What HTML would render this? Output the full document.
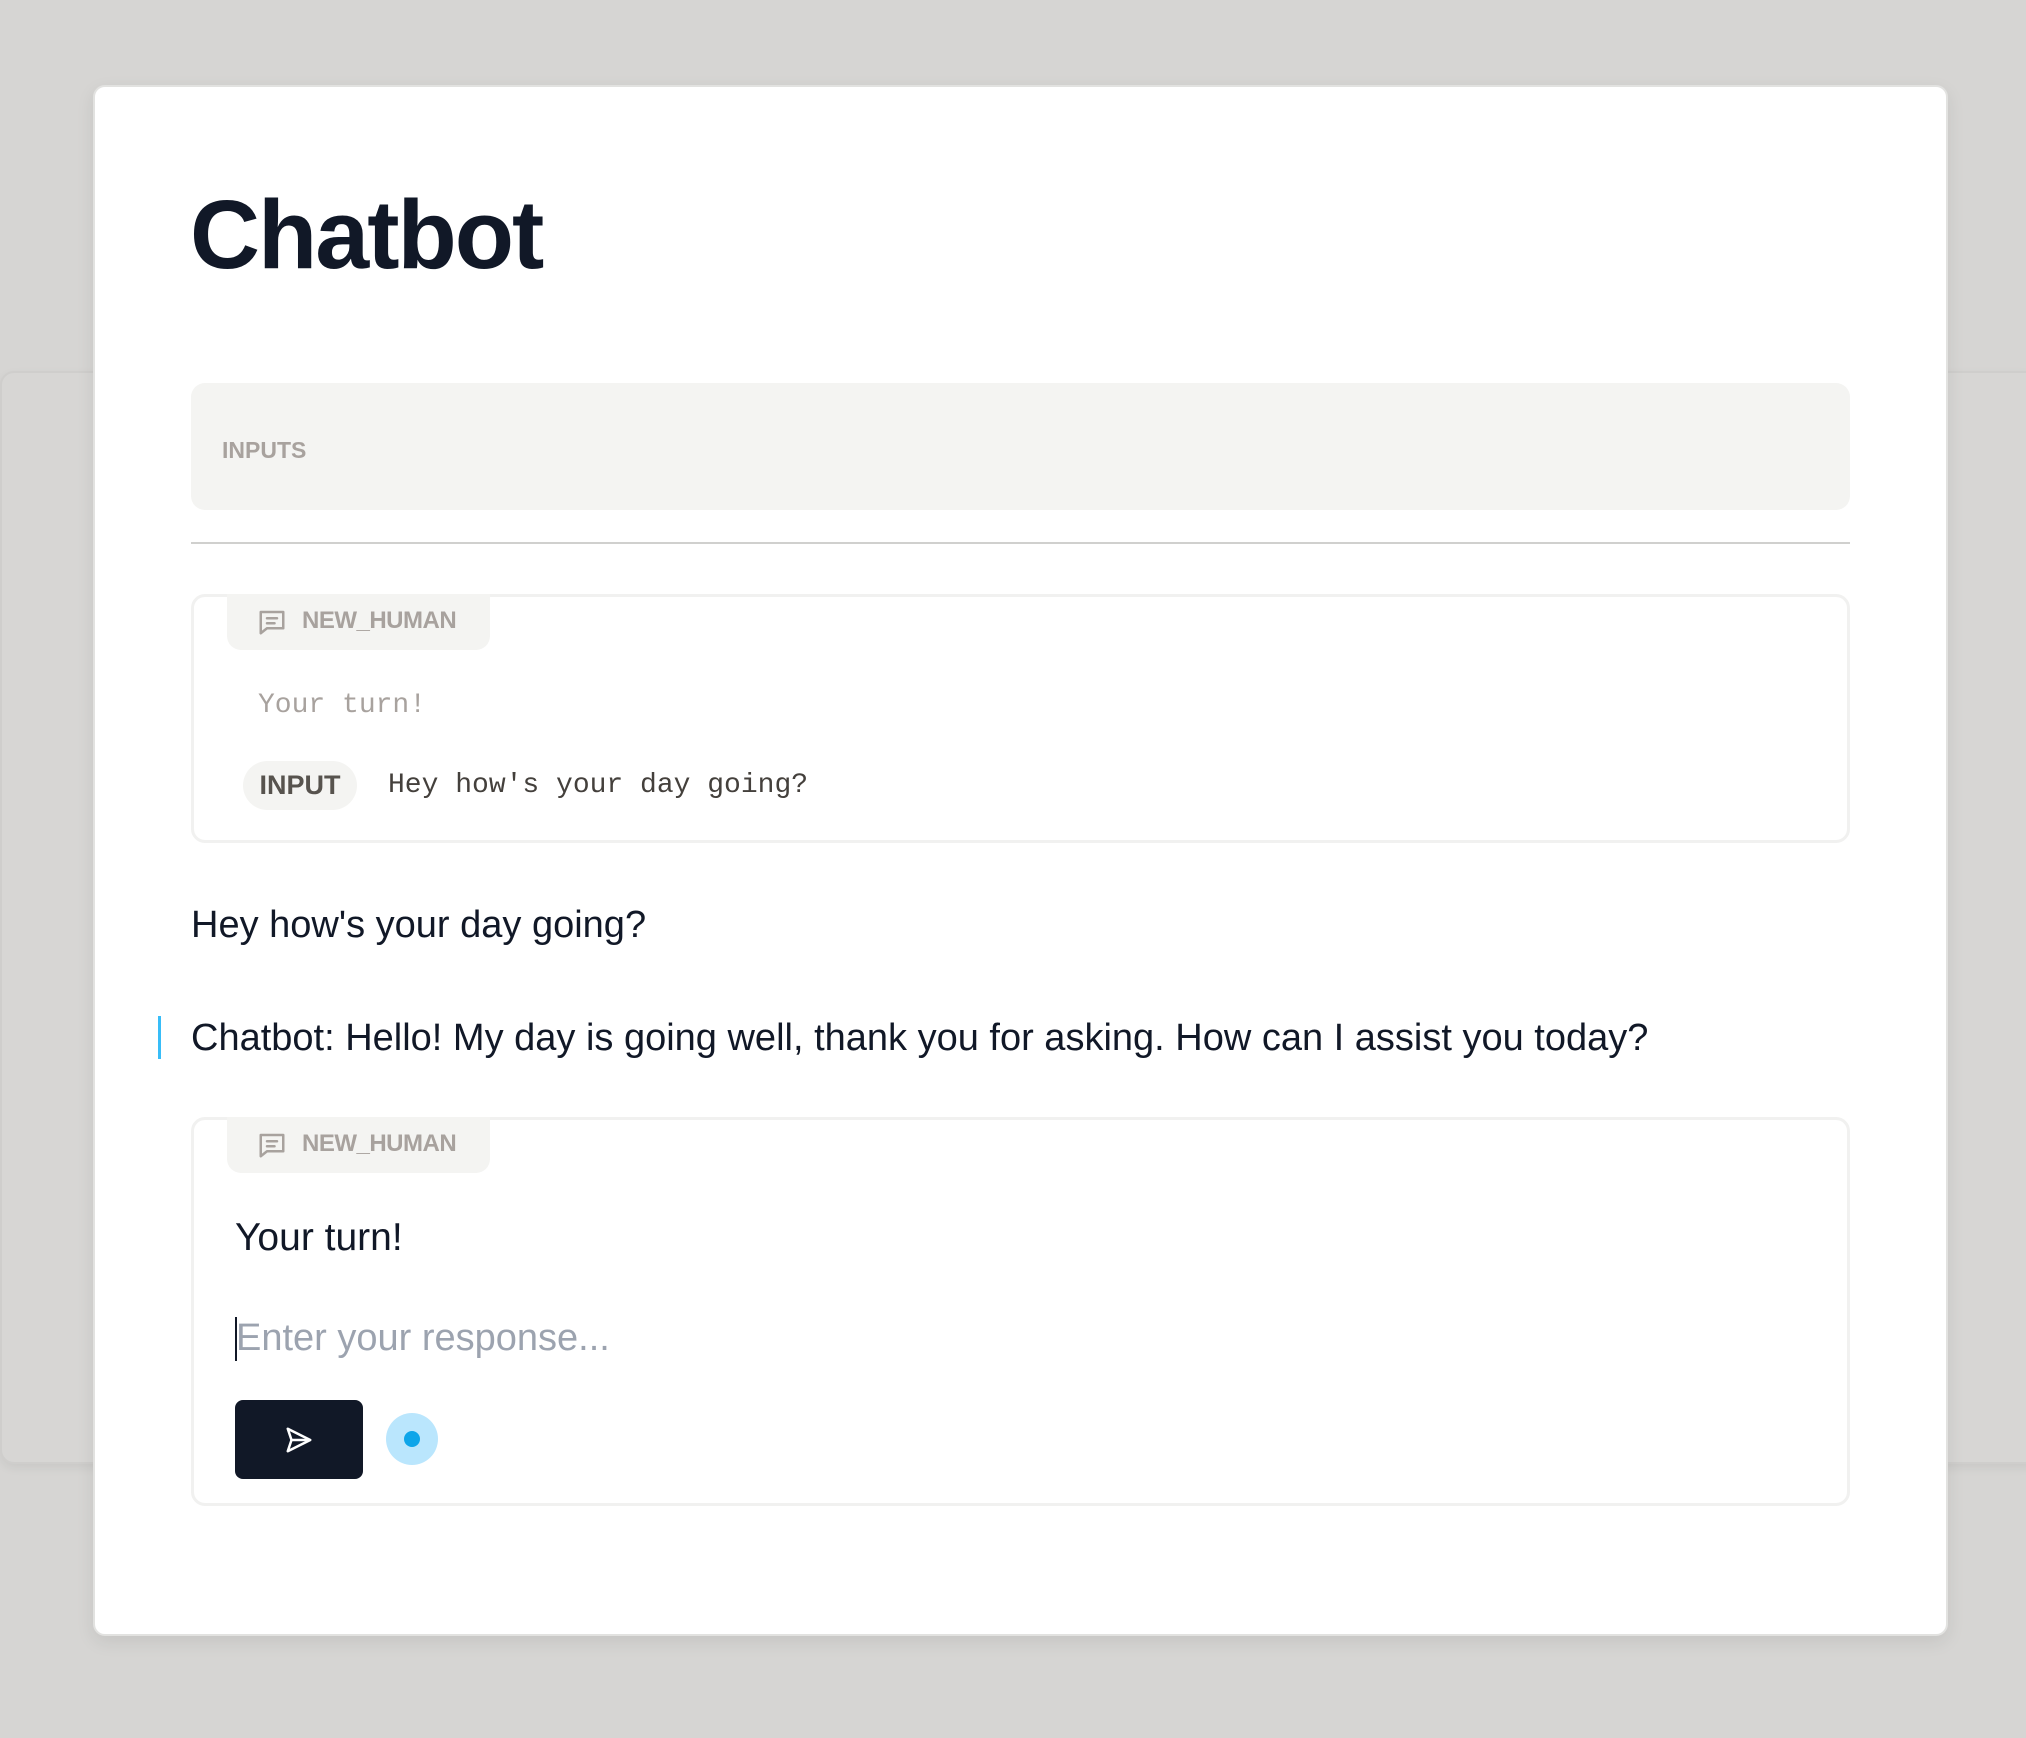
<!DOCTYPE html>
<html><head><meta charset="utf-8"><style>
*{margin:0;padding:0;box-sizing:border-box}
body{width:2026px;height:1738px;background:#d6d5d3;position:relative;overflow:hidden;font-family:"Liberation Sans",sans-serif}
.back{position:absolute;left:0;top:371px;width:2040px;height:1093px;background:#d7d6d4;border:2px solid #cfcecc;border-radius:14px;box-shadow:0 4px 10px rgba(0,0,0,.06)}
.modal{position:absolute;left:93px;top:85px;width:1855px;height:1551px;background:#fff;border-radius:12px;border:2px solid #e2e2e0;box-shadow:0 6px 18px rgba(0,0,0,.08)}
.abs{position:absolute}
h1{position:absolute;left:95px;top:88px;font-size:97px;font-weight:700;color:#111827;letter-spacing:-2px;line-height:120px}
.inputs{left:96px;top:296px;width:1659px;height:127px;background:#f4f4f2;border-radius:14px}
.inputs span{position:absolute;left:31px;top:54px;font-size:23px;font-weight:700;color:#a8a29e}
.hr{left:96px;top:455px;width:1659px;height:2px;background:#d0d0ce}
.card{border:3px solid #f1f1f0;border-radius:14px;left:96px;width:1659px}
.tab{position:absolute;left:33px;top:-3px;width:263px;height:56px;background:#f4f4f2;border-radius:0 0 14px 14px}
.tab svg{position:absolute;left:30px;top:13px}
.tab span{position:absolute;left:75px;top:13px;font-size:24px;font-weight:700;color:#a8a29e;letter-spacing:-.5px}
.mono{font-family:"Liberation Mono",monospace}
</style></head><body>
<div class="back"></div>
<div class="modal">
<h1>Chatbot</h1>
<div class="abs inputs"><span>INPUTS</span></div>
<div class="abs hr"></div>
<div class="abs card" style="top:507px;height:249px">
 <div class="tab"><svg width="30" height="30" viewBox="0 0 24 24" fill="none" stroke="#a8a29e" stroke-width="2" stroke-linejoin="round" stroke-linecap="round"><path d="M3 4h18v13H8l-5 4z"/><path d="M8 9h8M8 13h6"/></svg><span>NEW_HUMAN</span></div>
 <div class="abs mono" style="left:64px;top:93px;font-size:28px;color:#a8a29e">Your turn!</div>
 <div class="abs" style="left:49px;top:164px;width:114px;height:49px;border-radius:25px;background:#f4f4f2;font-size:27px;font-weight:700;color:#57534e;text-align:center;line-height:49px">INPUT</div>
 <div class="abs mono" style="left:194px;top:173px;font-size:28px;color:#44403c">Hey how's your day going?</div>
</div>
<div class="abs" style="left:96px;top:817px;font-size:38px;color:#111827">Hey how's your day going?</div>
<div class="abs" style="left:63px;top:929px;width:3px;height:43px;background:#38bdf8"></div>
<div class="abs" style="left:96px;top:930px;font-size:38px;color:#111827">Chatbot: Hello! My day is going well, thank you for asking. How can I assist you today?</div>
<div class="abs card" style="top:1030px;height:389px">
 <div class="tab"><svg width="30" height="30" viewBox="0 0 24 24" fill="none" stroke="#a8a29e" stroke-width="2" stroke-linejoin="round" stroke-linecap="round"><path d="M3 4h18v13H8l-5 4z"/><path d="M8 9h8M8 13h6"/></svg><span>NEW_HUMAN</span></div>
 <div class="abs" style="left:41px;top:96px;font-size:39px;color:#111827">Your turn!</div>
 <div class="abs" style="left:41px;top:197px;width:2px;height:44px;background:#111827"></div>
 <div class="abs" style="left:42px;top:197px;font-size:38px;color:#9ca3af">Enter your response...</div>
 <div class="abs" style="left:41px;top:280px;width:128px;height:79px;background:#111827;border-radius:8px">
  <svg class="abs" style="left:49px;top:25px" width="30" height="30" viewBox="0 0 24 24" fill="none" stroke="#fff" stroke-width="2" stroke-linejoin="round"><path d="M3 3l18 9-18 9 3-9z"/><path d="M6 12h15"/></svg>
 </div>
 <div class="abs" style="left:192px;top:293px;width:52px;height:52px;border-radius:50%;background:#bae6fd"><div class="abs" style="left:18px;top:18px;width:16px;height:16px;border-radius:50%;background:#0ea5e9"></div></div>
</div>
</div>
</body></html>
